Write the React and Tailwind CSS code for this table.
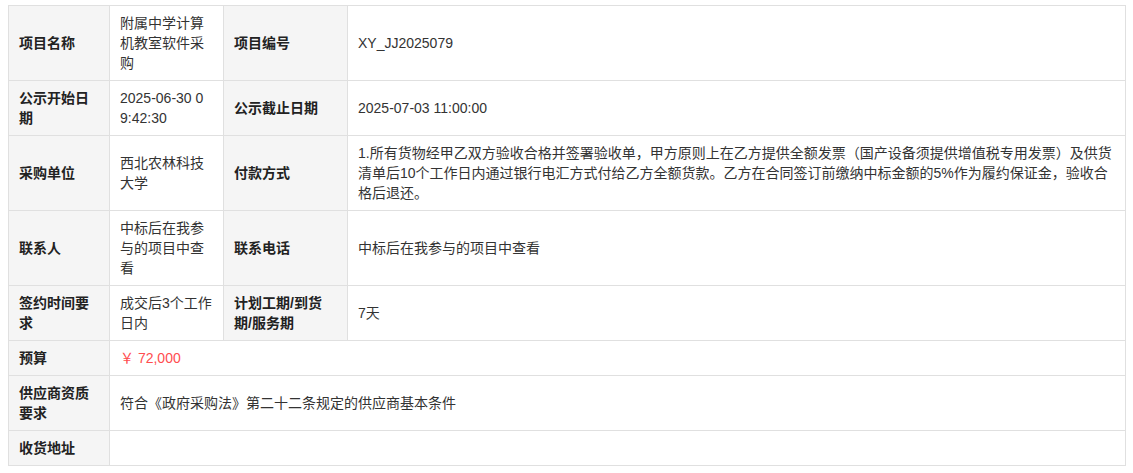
const rows = [
  [
    { label: '项目名称', value: '附属中学计算机教室软件采购' },
    { label: '项目编号', value: 'XY_JJ2025079' },
  ],
  [
    { label: '公示开始日期', value: '2025-06-30 09:42:30', tight: true },
    { label: '公示截止日期', value: '2025-07-03 11:00:00' },
  ],
  [
    { label: '采购单位', value: '西北农林科技大学' },
    {
      label: '付款方式',
      value:
        '1.所有货物经甲乙双方验收合格并签署验收单，甲方原则上在乙方提供全额发票（国产设备须提供增值税专用发票）及供货清单后10个工作日内通过银行电汇方式付给乙方全额货款。乙方在合同签订前缴纳中标金额的5%作为履约保证金，验收合格后退还。',
    },
  ],
  [
    { label: '联系人', value: '中标后在我参与的项目中查看' },
    { label: '联系电话', value: '中标后在我参与的项目中查看' },
  ],
  [
    { label: '签约时间要求', value: '成交后3个工作日内' },
    { label: '计划工期/到货期/服务期', value: '7天' },
  ],
];

const wideRows = [
  { label: '预算', value: '￥ 72,000', red: true },
  { label: '供应商资质要求', value: '符合《政府采购法》第二十二条规定的供应商基本条件' },
  { label: '收货地址', value: '' },
];

const th = 'border border-[#e0e0e0] bg-[#f5f5f5] pl-[10px] pr-[14px] py-[7px] text-left align-middle font-bold text-[#222]';
const td = 'border border-[#e0e0e0] bg-white pl-[10px] py-[7px] text-left align-middle break-all';

export default function App() {
  return (
    <div
      className="bg-white pl-2 pr-[7px] pt-[5px] pb-2 text-[14px] leading-5 text-[#333]"
      style={{ fontFamily: '"Liberation Sans", Arial, "Noto Sans CJK SC", sans-serif' }}
    >
      <table className="w-full table-fixed border-collapse">
        <colgroup>
          <col className="w-[101px]" />
          <col className="w-[114px]" />
          <col className="w-[124px]" />
          <col />
        </colgroup>
        <tbody>
          {rows.map((r, i) => (
            <tr key={i}>
              <th className={th}>{r[0].label}</th>
              <td className={`${td} ${r[0].tight ? 'pr-[13px]' : 'pr-[10px]'}`}>{r[0].value}</td>
              <th className={th}>{r[1].label}</th>
              <td className={`${td} pr-[10px]`}>{r[1].value}</td>
            </tr>
          ))}
          {wideRows.map((r, i) => (
            <tr key={'w' + i}>
              <th className={th}>{r.label}</th>
              <td colSpan={3} className={`${td} pr-[10px] h-[35px] ${r.red ? 'text-[#ff4d4f]' : ''}`}>
                {r.value}
              </td>
            </tr>
          ))}
        </tbody>
      </table>
    </div>
  );
}
